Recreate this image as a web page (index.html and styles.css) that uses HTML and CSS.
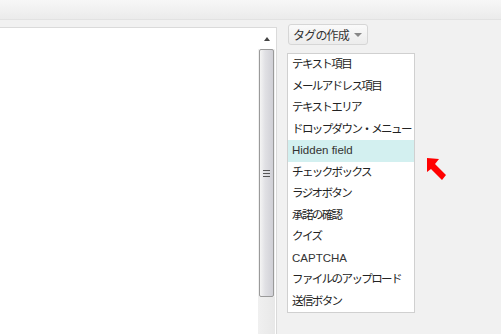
FILE: index.html
```html
<!DOCTYPE html>
<html lang="ja">
    <head>
        <meta charset="UTF-8" />
        <title>フォーム編集</title>
        <link rel="stylesheet" href="styles.css">
    </head>
    <body>
        <div class="topbar"></div>

        <div class="main">
            <div class="editor">
                <div class="text"></div>
                <div class="scroll">
                    <div class="arrow"></div>
                    <div class="thumb">
                        <div class="grip"></div>
                    </div>
                    <div class="track"></div>
                </div>
            </div>

            <div class="side">
                <div class="tagbtn"><span class="jp">タグの作成</span> <span class="caret"></span></div>

                <div class="taglist">
                    <div class="item jp">テキスト項目</div>
                    <div class="item jp">メールアドレス項目</div>
                    <div class="item jp">テキストエリア</div>
                    <div class="item jp">ドロップダウン・メニュー</div>
                    <div class="item active">Hidden field</div>
                    <div class="item jp">チェックボックス</div>
                    <div class="item jp">ラジオボタン</div>
                    <div class="item jp">承諾の確認</div>
                    <div class="item jp">クイズ</div>
                    <div class="item">CAPTCHA</div>
                    <div class="item jp">ファイルのアップロード</div>
                    <div class="item jp">送信ボタン</div>
                </div>

                <svg class="pointer" width="20" height="24" viewBox="0 0 20 24">
                    <polygon points="0,0 12,1 8,6 19,17 15,22 4,11 0,14" fill="#f00" />
                </svg>
            </div>
        </div>
    </body>
</html>
```

FILE: styles.css
```css
body {
    margin: 0;
    background: #f1f1f1;
    font-family: "Liberation Sans", "Noto Sans CJK JP", sans-serif;
    font-size: 12px;
    color: #222;
    overflow: hidden;
}

.jp {
    font-size: 11.5px;
    letter-spacing: -1.6px;
}

.topbar {
    height: 19px;
    background: linear-gradient(#f7f7f7, #ebebeb);
    border-bottom: 1px solid #e2e2e2;
}

.main {
    display: flex;
    height: 314px;
}

.editor {
    width: 276px;
    margin-top: 7px;
    background: #fff;
    border-top: 1px solid #dadada;
    border-right: 1px solid #dadada;
    display: flex;
}

.text {
    flex: 1;
}

.scroll {
    width: 17px;
    margin-right: 1px;
    display: flex;
    flex-direction: column;
    background: #f0f0f0;
}

.arrow {
    height: 21px;
    background: #fff;
    display: flex;
    justify-content: center;
    align-items: center;
}

.arrow::before {
    content: "";
    border-left: 3px solid transparent;
    border-right: 3px solid transparent;
    border-bottom: 4px solid #444;
}

.thumb {
    height: 246px;
    margin: 0 1px;
    border: 1px solid #9a9a9a;
    border-radius: 2px;
    background: linear-gradient(to right, #f4f4f4, #e0e0e4 40%, #d0d0d6);
    display: flex;
    justify-content: center;
    align-items: center;
}

.grip {
    width: 7px;
    height: 5px;
    border-top: 1px solid #555;
    border-bottom: 1px solid #555;
    position: relative;
}

.grip::after {
    content: "";
    position: absolute;
    left: 0;
    right: 0;
    top: 2px;
    border-top: 1px solid #555;
}

.track {
    flex: 1;
    background: linear-gradient(to right, #f0f0f0, #e8e8e8);
}

.side {
    flex: 1;
    padding: 4px 0 0 10px;
    position: relative;
}

.tagbtn {
    display: inline-flex;
    align-items: center;
    gap: 5px;
    height: 19px;
    padding: 0 5px 0 4px;
    border: 1px solid #d6d6d6;
    border-radius: 3px;
    background: linear-gradient(#fafafa, #ececec);
    color: #333;
    margin-left: 1px;
}

.tagbtn .jp {
    font-size: 12px;
    letter-spacing: -0.8px;
}

.caret {
    border-left: 4px solid transparent;
    border-right: 4px solid transparent;
    border-top: 4px solid #888;
    margin-top: 1px;
}

.taglist {
    width: 126px;
    margin-top: 8px;
    background: #fff;
    border: 1px solid #d0d0d0;
    padding: 0;
}

.item {
    height: 21.5px;
    line-height: 20px;
    padding-left: 4px;
    white-space: nowrap;
    color: #222;
}

.item:not(.jp) {
    font-size: 11.5px;
    color: #333;
}

.active {
    background: #d3f0f0;
}

.pointer {
    position: absolute;
    left: 150px;
    top: 138px;
}
```
